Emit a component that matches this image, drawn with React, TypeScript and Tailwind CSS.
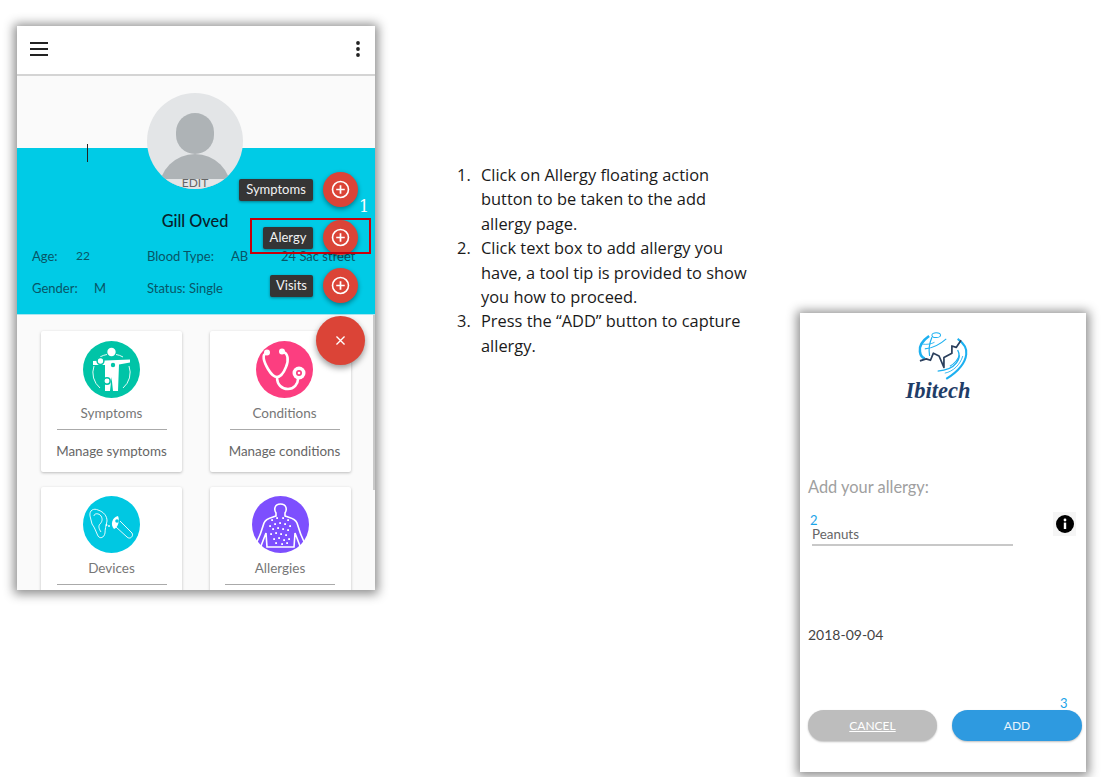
import { ReactNode } from 'react';

function BodyIcon() {
  return (
    <svg viewBox="0 0 57 57" className="w-[57px] h-[57px]">
      <circle cx="28.5" cy="28.5" r="28.5" fill="#00c4a7" />
      <circle cx="28.5" cy="11" r="4.2" fill="#fff" />
      <path d="M17 16 A19 19 0 0 1 24 13.5 M33 13.5 A19 19 0 0 1 40 16 M11 25 A20 20 0 0 0 17 47 M46 25 A20 20 0 0 1 40 47" fill="none" stroke="#fff" strokeWidth="0.9" />
      <path d="M10 20 L47 18.5 L47 21.5 L36 23.5 L35 50 L30 50 L28.5 36 L27 50 L22 50 L22 24 L10 24 Z" fill="#fff" />
      <circle cx="17.5" cy="20" r="3.4" fill="#fff" stroke="#00c4a7" strokeWidth="1.5" />
      <circle cx="30" cy="24" r="2.2" fill="#00c4a7" />
      <circle cx="24" cy="40" r="3.2" fill="#fff" stroke="#00c4a7" strokeWidth="1.5" />
    </svg>
  );
}

function StethoscopeIcon() {
  return (
    <svg viewBox="0 0 57 57" className="w-[57px] h-[57px]">
      <circle cx="28.5" cy="28.5" r="28.5" fill="#fc3e80" />
      <path d="M11 12 C5 13 8 21 12 28 C15 33 18 36 21 36 C25 36 28 31 30 26 C33 19 32 12 27 11" fill="none" stroke="#fff" strokeWidth="2.6" />
      <circle cx="11" cy="11.5" r="3" fill="#fff" />
      <circle cx="26" cy="10.5" r="3" fill="#fff" />
      <path d="M21 36 C21 44 26 48 32 48 C38 48 42 43 42 38" fill="none" stroke="#fff" strokeWidth="2.6" />
      <circle cx="43" cy="32" r="6.5" fill="#fff" />
      <circle cx="43" cy="32" r="3" fill="#fc3e80" />
      <circle cx="43" cy="32" r="1.3" fill="#fff" />
    </svg>
  );
}

function EarIcon() {
  return (
    <svg viewBox="0 0 57 57" className="w-[57px] h-[57px]">
      <circle cx="28.5" cy="28.5" r="28.5" fill="#00c8e2" />
      <g fill="none" stroke="#fff" strokeWidth="0.9">
        <path d="M7 20 C6 14 11 12 15 14 C21 16 24 20 24 25 C23 30 22 33 22 37 C21 42 17 43 15 40 C13 36 12 32 9 28 C8 25 8 23 7 20 Z" />
        <path d="M11 20 C11 17 16 17 18 20 C20 23 19 26 17 28 C15 30 16 33 18 36" />
        <path d="M37 25 L49 37 C51 40 47 44 44 41 L33 31" />
      </g>
      <path d="M35 20 C29 21 27 29 31 33 C35 32 37 24 35 20 Z" fill="#fff" />
      <circle cx="34" cy="25" r="1.8" fill="#00c8e2" />
      <circle cx="26" cy="30" r="0.9" fill="#fff" />
      <circle cx="23.5" cy="29" r="0.9" fill="#fff" />
    </svg>
  );
}

const rashDots = [
  [20, 24], [25, 22], [31, 22], [36, 24], [18, 30], [23, 28], [28, 27], [33, 28], [38, 30],
  [21, 33], [26, 32], [31, 33], [36, 34], [19, 38], [24, 37], [29, 38], [34, 39], [22, 43],
  [27, 42], [32, 44], [37, 43], [24, 47], [30, 48], [35, 47],
];

function TorsoIcon() {
  return (
    <svg viewBox="0 0 57 57" className="w-[57px] h-[57px]">
      <circle cx="28.5" cy="28.5" r="28.5" fill="#7d4ffe" />
      <path d="M24 17 C22 14 22 8 28.5 8 C35 8 35 14 33 17 L33 20 C38 22 43 22 45 27 C47 34 50 42 53 48 L48 50 L43 37 L42 51 L15 51 L14 37 L9 50 L4 48 C7 42 10 34 12 27 C14 22 19 22 24 20 Z" fill="none" stroke="#fff" strokeWidth="1.6" />
      {rashDots.map(([x, y]) => (
        <rect key={`${x}-${y}`} x={x - 0.8} y={y - 0.8} width="1.8" height="1.8" fill="#fff" />
      ))}
    </svg>
  );
}

function Logo() {
  return (
    <svg viewBox="0 0 57 56" className="w-[57px] h-[56px]">
      <g fill="none" stroke="#1cb0f0">
        <path d="M11.7 4.7 C4 10 0 17 1 23 C1.5 27 4 30 6.7 31" strokeWidth="3" />
        <path d="M45 8 C52 13 56 20 55 26 C54 36 47 45 31.7 54.7" strokeWidth="2.4" />
        <path d="M6.7 19.7 C15 19 25 14 31.7 8" strokeWidth="1.2" />
        <path d="M3 14 C10 15 14 14 18 12" strokeWidth="1" />
        <path d="M15 6 C12 13 11 21 12.3 28" strokeWidth="1.4" />
        <path d="M45 21 C50 30 44 44 21.7 45.7" strokeWidth="1.6" />
        <path d="M36 40 C41 37 45 33 47 27" strokeWidth="1.2" />
        <path d="M30 48 C40 46 48 38 51 28" strokeWidth="1" />
        <ellipse cx="20" cy="3.7" rx="5" ry="2.8" strokeWidth="1.2" />
      </g>
      <path d="M1 33.7 L8.3 31.3 L13.3 33 L16.7 24.7 L23.3 28 L29 41.3 L29 29.7 L38.3 24.7 L38.3 16.3 L43.3 18 L49 9.7" fill="none" stroke="#2b3f5c" strokeWidth="2" strokeLinejoin="round" />
    </svg>
  );
}

function PlusFab() {
  return (
    <div className="w-[35px] h-[35px] rounded-full bg-[#db4437] flex items-center justify-center shadow-[0_2px_5px_rgba(0,0,0,0.4)]">
      <svg viewBox="0 0 20 20" className="w-[19px] h-[19px]">
        <circle cx="10" cy="10" r="8.4" fill="none" stroke="#fff" strokeWidth="1.7" />
        <path d="M10 5.5 V14.5 M5.5 10 H14.5" stroke="#fff" strokeWidth="1.8" />
      </svg>
    </div>
  );
}

function DialItem({ label, width }: { label: string; width: string }) {
  return (
    <div className="flex items-center justify-end h-[35px]">
      <span className={`h-[22px] flex items-center justify-center rounded-[2px] bg-[#353535] text-[#f2f2f2] text-[13px] shadow-[0_1px_3px_rgba(0,0,0,0.4)] ${width}`}>
        {label}
      </span>
      <div className="ml-[10px]">
        <PlusFab />
      </div>
    </div>
  );
}

function Card({ icon, title, sub, className }: { icon: ReactNode; title: string; sub?: string; className: string }) {
  return (
    <div className={`h-[141px] bg-white rounded-[2px] shadow-[0_1px_3px_rgba(0,0,0,0.25)] flex flex-col items-center ${className}`}>
      {icon}
      <div className="mt-[6px] h-[18px] leading-[18px] text-[13.5px] text-[#777]">{title}</div>
      <div className="mt-[7px] w-[110px] h-px bg-[#aaa]" />
      {sub && <div className="mt-[12px] text-[13.4px] leading-[18px] text-[#666] whitespace-nowrap">{sub}</div>}
    </div>
  );
}

function Phone() {
  return (
    <div className="relative w-[358px] h-[564px] ml-[17px] mt-[26px] shrink-0 bg-[#fafafa] overflow-hidden shadow-[0_1px_10px_3px_rgba(0,0,0,0.45)] font-['Lato',sans-serif]">
      <div className="h-[50px] bg-white border-b-2 border-[#d4d4d4] flex items-center justify-between pl-[13px] pr-[15px] pb-[2px]">
        <svg viewBox="0 0 18 14" className="w-[18px] h-[14px]">
          <path d="M0 1 H18 M0 7 H18 M0 13 H18" stroke="#222" strokeWidth="1.8" />
        </svg>
        <svg viewBox="0 0 4 16" className="w-[4px] h-[16px]">
          <circle cx="2" cy="2" r="1.9" fill="#222" />
          <circle cx="2" cy="8" r="1.9" fill="#222" />
          <circle cx="2" cy="14" r="1.9" fill="#222" />
        </svg>
      </div>
      <div className="h-[72px]" />
      <div className="h-[167px] bg-[#00cbe6] border-b border-[#a8e6f0] pt-[61px] text-[13px] text-[#085566]">
        <div className="pr-[2px] text-center text-[16.3px] leading-[24px] text-[#08202a] font-medium">Gill Oved</div>
        <div className="grid grid-cols-[115px_134px_auto] pl-[15px] mt-[13px] h-[20px] leading-[20px] whitespace-nowrap">
          <div className="flex">
            <span className="w-[44px]">Age:</span>
            <span className="text-[12px]">22</span>
          </div>
          <div className="flex">
            <span className="w-[84px]">Blood Type:</span>
            <span>AB</span>
          </div>
          <span>24 Sac street</span>
        </div>
        <div className="grid grid-cols-[115px_auto] pl-[15px] mt-[12px] h-[20px] leading-[20px] whitespace-nowrap">
          <div className="flex">
            <span className="w-[62px]">Gender:</span>
            <span>M</span>
          </div>
          <span>Status: Single</span>
        </div>
      </div>
      <div className="grid grid-cols-[141px_141px] gap-x-[28px] gap-y-[15px] pl-[24px] pt-[16px]">
        <Card icon={<BodyIcon />} title="Symptoms" sub="Manage symptoms" className="pt-[10px]" />
        <Card icon={<StethoscopeIcon />} title="Conditions" sub="Manage conditions" className="pt-[10px] pl-[8px]" />
        <Card icon={<EarIcon />} title="Devices" className="pt-[9px]" />
        <Card icon={<TorsoIcon />} title="Allergies" className="pt-[9px] pr-[1px]" />
      </div>

      {/* avatar sits over the band edge */}
      <div className="absolute left-[130px] top-[67px] w-[96px] h-[96px] rounded-full overflow-hidden bg-[#e3e5e7]">
        <div className="absolute left-[29px] top-[20px] w-[38px] h-[41px] rounded-full bg-[#aeb3b6]" />
        <div className="absolute left-[12px] top-[61px] w-[72px] h-[50px] rounded-t-full bg-[#aeb3b6]" />
        <div className="absolute left-0 top-[86px] w-full h-[12px] bg-[#e3e5e7]" />
      </div>
      <div className="absolute left-[130px] top-[151px] w-[96px] text-center text-[12px] leading-[12px] text-[#666]">EDIT</div>
      <div className="absolute left-[70px] top-[118px] w-px h-[18px] bg-[#222]" />

      {/* speed dial */}
      <div className="absolute right-[17px] top-[146px] flex flex-col gap-[13px]">
        <DialItem label="Symptoms" width="w-[74px]" />
        <DialItem label="Alergy" width="w-[50px]" />
        <DialItem label="Visits" width="w-[43px]" />
      </div>
      <div className="absolute left-[299px] top-[290px] w-[49px] h-[49px] rounded-full bg-[#db4437] flex items-center justify-center shadow-[0_3px_6px_rgba(0,0,0,0.4)]">
        <svg viewBox="0 0 10 10" className="w-[9px] h-[9px]">
          <path d="M0.5 0.5 L9.5 9.5 M9.5 0.5 L0.5 9.5" stroke="#fff" strokeWidth="1.5" />
        </svg>
      </div>

      {/* annotation */}
      <div className="absolute left-[233px] top-[192px] w-[121px] h-[36px] border-2 border-[#c8000a]" />
      <div className="absolute left-[342px] top-[171px] text-[16px] leading-[20px] text-white font-['DejaVu_Serif',serif]">1</div>
      <div className="absolute right-0 top-[289px] w-[2px] h-[175px] bg-[#c8c8c8]" />
    </div>
  );
}

const steps = [
  'Click on Allergy floating action button to be taken to the add allergy page.',
  'Click text box to add allergy you have, a tool tip is provided to show you how to proceed.',
  'Press the “ADD” button to capture allergy.',
];

function Instructions() {
  return (
    <div className="w-[425px] shrink-0 pl-[82px] pr-[48px] pt-[137px] mt-[26px] text-[16.4px] leading-[24.4px] text-[#1a1a1a] font-['Open_Sans',sans-serif]">
      <ol>
        {steps.map((step, i) => (
          <li key={step} className="flex">
            <span className="w-[24px] shrink-0">{i + 1}.</span>
            <span>{step}</span>
          </li>
        ))}
      </ol>
    </div>
  );
}

function AddAllergy() {
  return (
    <div className="w-[286px] h-[459px] mt-[313px] shrink-0 bg-white flex flex-col shadow-[0_1px_10px_3px_rgba(0,0,0,0.45)] font-['Lato',sans-serif]">
      <div className="flex flex-col items-center pt-[19px] h-[90px]">
        <Logo />
        <div className="-mt-[1px] mr-[10px] text-[22.5px] leading-[24px] font-bold italic text-[#1f3d68] font-['Liberation_Serif',serif]">Ibitech</div>
      </div>
      <div className="mt-[73px] pl-[8px] text-[16.4px] leading-[22px] text-[#a0a0a0]">Add your allergy:</div>
      <div className="relative mt-[15px] pl-[12px] h-[36px]">
        <div className="-ml-[2px] text-[13px] leading-[14px] text-[#1ca4e8]">2</div>
        <div className="text-[13.4px] leading-[15px] text-[#666]">Peanuts</div>
        <div className="mt-[2px] w-[201px] h-[2px] bg-[#c8c8c8]" />
        <div className="absolute left-[253px] top-[-1px] w-[23px] h-[24px] bg-[#f5f5f5] flex items-center justify-center">
          <svg viewBox="0 0 18 18" className="w-[18px] h-[18px]">
            <circle cx="9" cy="9" r="9" fill="#000" />
            <circle cx="9" cy="5" r="1.4" fill="#fff" />
            <rect x="7.8" y="7.6" width="2.4" height="6.4" fill="#fff" />
          </svg>
        </div>
      </div>
      <div className="mt-[77px] pl-[8px] text-[14px] leading-[18px] text-[#444]">2018-09-04</div>
      <div className="relative mt-[66px] flex gap-[15px] pl-[8px]">
        <div className="w-[129px] h-[31px] rounded-full bg-[#bdbdbd] flex items-center justify-center text-[12px] text-white underline shadow-[0_1px_2px_rgba(0,0,0,0.25)]">CANCEL</div>
        <div className="w-[130px] h-[31px] rounded-full bg-[#2e9ae0] flex items-center justify-center text-[12px] text-[#e8f4fc] shadow-[0_1px_2px_rgba(0,0,0,0.25)]">ADD</div>
        <span className="absolute left-[260px] -top-[14px] text-[13px] leading-[14px] text-[#1ca4e8]">3</span>
      </div>
    </div>
  );
}

export default function App() {
  return (
    <div className="w-[1103px] h-[777px] bg-white flex items-start overflow-hidden">
      <Phone />
      <Instructions />
      <AddAllergy />
    </div>
  );
}
